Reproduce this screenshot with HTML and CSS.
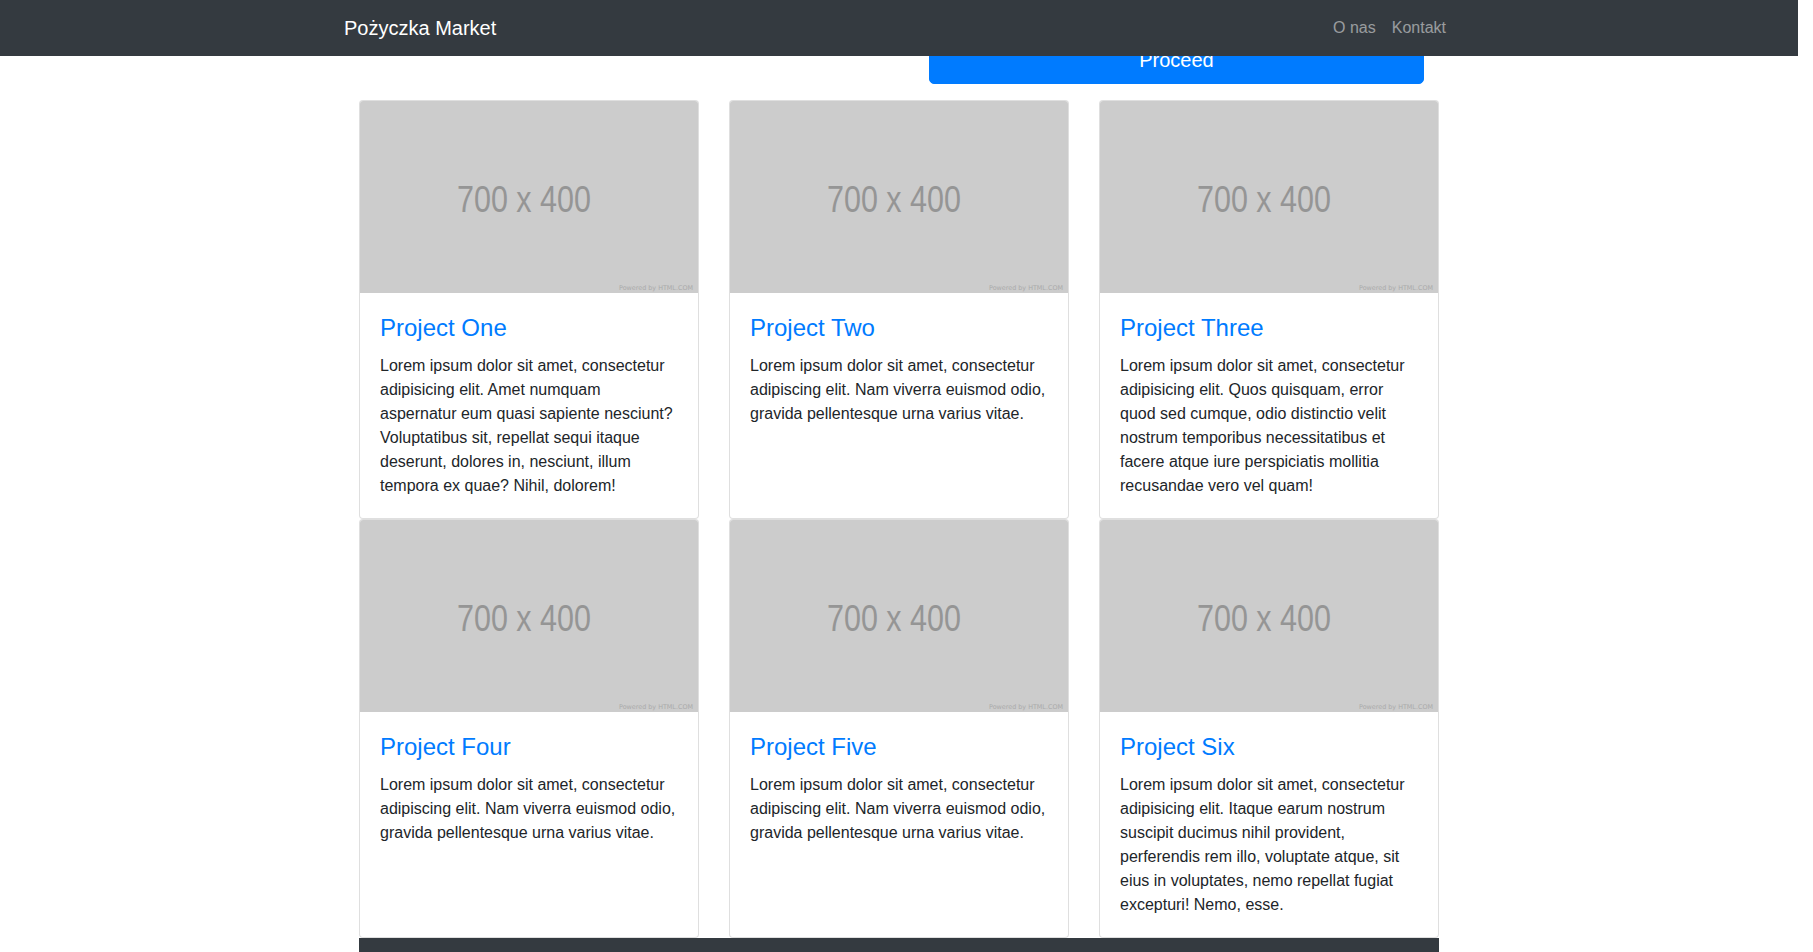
FILE: index.html
```html
<!DOCTYPE html>
<html lang="pl">
<head>
<meta charset="utf-8">
<title>Pożyczka Market</title>
<link rel="stylesheet" href="styles.css">
</head>
<body>
<nav class="navbar">
  <div class="navbar-inner">
    <a class="brand" href="#">Pożyczka Market</a>
    <ul class="nav-links">
      <li><a href="#">O nas</a></li>
      <li><a href="#">Kontakt</a></li>
    </ul>
  </div>
</nav>

<main class="page">
  <div class="action-row">
    <button class="btn-proceed" type="button">Proceed</button>
  </div>

  <div class="grid">
    <div class="card">
      <svg class="thumb" viewBox="0 0 338 192" preserveAspectRatio="none"><rect width="338" height="192" fill="#cccccc"/><text class="ph-main" x="164" y="111" text-anchor="middle" textLength="134" lengthAdjust="spacingAndGlyphs">700 x 400</text><text class="ph-small" x="333" y="188.5" text-anchor="end" textLength="74" lengthAdjust="spacingAndGlyphs">Powered by HTML.COM</text></svg>
      <div class="card-body">
        <h4 class="card-title"><a href="#">Project One</a></h4>
        <p class="card-text">Lorem ipsum dolor sit amet, consectetur adipisicing elit. Amet numquam aspernatur eum quasi sapiente nesciunt? Voluptatibus sit, repellat sequi itaque deserunt, dolores in, nesciunt, illum tempora ex quae? Nihil, dolorem!</p>
      </div>
    </div>
    <div class="card">
      <svg class="thumb" viewBox="0 0 338 192" preserveAspectRatio="none"><rect width="338" height="192" fill="#cccccc"/><text class="ph-main" x="164" y="111" text-anchor="middle" textLength="134" lengthAdjust="spacingAndGlyphs">700 x 400</text><text class="ph-small" x="333" y="188.5" text-anchor="end" textLength="74" lengthAdjust="spacingAndGlyphs">Powered by HTML.COM</text></svg>
      <div class="card-body">
        <h4 class="card-title"><a href="#">Project Two</a></h4>
        <p class="card-text">Lorem ipsum dolor sit amet, consectetur adipiscing elit. Nam viverra euismod odio, gravida pellentesque urna varius vitae.</p>
      </div>
    </div>
    <div class="card">
      <svg class="thumb" viewBox="0 0 338 192" preserveAspectRatio="none"><rect width="338" height="192" fill="#cccccc"/><text class="ph-main" x="164" y="111" text-anchor="middle" textLength="134" lengthAdjust="spacingAndGlyphs">700 x 400</text><text class="ph-small" x="333" y="188.5" text-anchor="end" textLength="74" lengthAdjust="spacingAndGlyphs">Powered by HTML.COM</text></svg>
      <div class="card-body">
        <h4 class="card-title"><a href="#">Project Three</a></h4>
        <p class="card-text">Lorem ipsum dolor sit amet, consectetur adipisicing elit. Quos quisquam, error quod sed cumque, odio distinctio velit nostrum temporibus necessitatibus et facere atque iure perspiciatis mollitia recusandae vero vel quam!</p>
      </div>
    </div>
    <div class="card">
      <svg class="thumb" viewBox="0 0 338 192" preserveAspectRatio="none"><rect width="338" height="192" fill="#cccccc"/><text class="ph-main" x="164" y="111" text-anchor="middle" textLength="134" lengthAdjust="spacingAndGlyphs">700 x 400</text><text class="ph-small" x="333" y="188.5" text-anchor="end" textLength="74" lengthAdjust="spacingAndGlyphs">Powered by HTML.COM</text></svg>
      <div class="card-body">
        <h4 class="card-title"><a href="#">Project Four</a></h4>
        <p class="card-text">Lorem ipsum dolor sit amet, consectetur adipiscing elit. Nam viverra euismod odio, gravida pellentesque urna varius vitae.</p>
      </div>
    </div>
    <div class="card">
      <svg class="thumb" viewBox="0 0 338 192" preserveAspectRatio="none"><rect width="338" height="192" fill="#cccccc"/><text class="ph-main" x="164" y="111" text-anchor="middle" textLength="134" lengthAdjust="spacingAndGlyphs">700 x 400</text><text class="ph-small" x="333" y="188.5" text-anchor="end" textLength="74" lengthAdjust="spacingAndGlyphs">Powered by HTML.COM</text></svg>
      <div class="card-body">
        <h4 class="card-title"><a href="#">Project Five</a></h4>
        <p class="card-text">Lorem ipsum dolor sit amet, consectetur adipiscing elit. Nam viverra euismod odio, gravida pellentesque urna varius vitae.</p>
      </div>
    </div>
    <div class="card">
      <svg class="thumb" viewBox="0 0 338 192" preserveAspectRatio="none"><rect width="338" height="192" fill="#cccccc"/><text class="ph-main" x="164" y="111" text-anchor="middle" textLength="134" lengthAdjust="spacingAndGlyphs">700 x 400</text><text class="ph-small" x="333" y="188.5" text-anchor="end" textLength="74" lengthAdjust="spacingAndGlyphs">Powered by HTML.COM</text></svg>
      <div class="card-body">
        <h4 class="card-title"><a href="#">Project Six</a></h4>
        <p class="card-text">Lorem ipsum dolor sit amet, consectetur adipisicing elit. Itaque earum nostrum suscipit ducimus nihil provident, perferendis rem illo, voluptate atque, sit eius in voluptates, nemo repellat fugiat excepturi! Nemo, esse.</p>
      </div>
    </div>
  </div>

  <footer class="footer"></footer>
</main>
</body>
</html>
```

FILE: styles.css
```css
html {
  overflow: hidden;
  background: #ffffff;
}

body {
  margin: 0;
  width: 1798px;
  font-family: "Liberation Sans", Arial, sans-serif;
  font-size: 16px;
  line-height: 1.5;
  color: #212529;
  background: #ffffff;
}

a {
  text-decoration: none;
}

/* Navbar */
.navbar {
  position: fixed;
  top: 0;
  left: 0;
  width: 1798px;
  height: 56px;
  background: #343a40;
  z-index: 10;
}

.navbar-inner {
  box-sizing: border-box;
  width: 1140px;
  height: 56px;
  margin: 0 auto;
  padding: 0 15px;
  display: flex;
  align-items: center;
  justify-content: space-between;
}

.brand {
  font-size: 20px;
  line-height: 30px;
  color: #ffffff;
  padding-bottom: 1px;
}

.nav-links {
  list-style: none;
  margin: 0;
  padding: 0;
  display: flex;
}

.nav-links a {
  display: block;
  padding: 8px;
  color: rgba(255, 255, 255, 0.5);
  font-size: 16px;
  line-height: 24px;
}

/* Page */
.page {
  width: 1080px;
  margin: 0 auto;
  padding-top: 36px;
}

.action-row {
  display: flex;
  justify-content: flex-end;
  padding-right: 15px;
  margin-bottom: 16px;
}

.btn-proceed {
  width: 495px;
  height: 48px;
  border: 1px solid #007bff;
  border-radius: 5px;
  background: #007bff;
  color: #ffffff;
  font-family: "Liberation Sans", Arial, sans-serif;
  font-size: 20px;
  line-height: 30px;
  padding: 8px 16px;
  cursor: pointer;
}

.grid {
  display: grid;
  grid-template-columns: repeat(3, 1fr);
  column-gap: 30px;
  row-gap: 0;
}

.card {
  display: flex;
  flex-direction: column;
  border: 1px solid rgba(0, 0, 0, 0.125);
  border-radius: 4px;
  background: #ffffff;
  overflow: hidden;
}

.thumb {
  display: block;
  width: 100%;
  height: 192px;
}

.ph-main {
  font-family: "Liberation Sans", Arial, sans-serif;
  font-size: 37px;
  fill: #959595;
}

.ph-small {
  font-family: "DejaVu Sans", sans-serif;
  font-size: 6.5px;
  fill: #aaaaaa;
}

.card-body {
  padding: 21px 20px 20px 20px;
  flex: 1;
}

.card-title {
  margin: 0 0 11px 0;
  font-size: 24px;
  font-weight: 500;
  line-height: 1.2;
}

.card-title a {
  color: #007bff;
}

.card-text {
  margin: 0;
}

/* Footer */
.footer {
  background: #343a40;
  height: 120px;
}
```
